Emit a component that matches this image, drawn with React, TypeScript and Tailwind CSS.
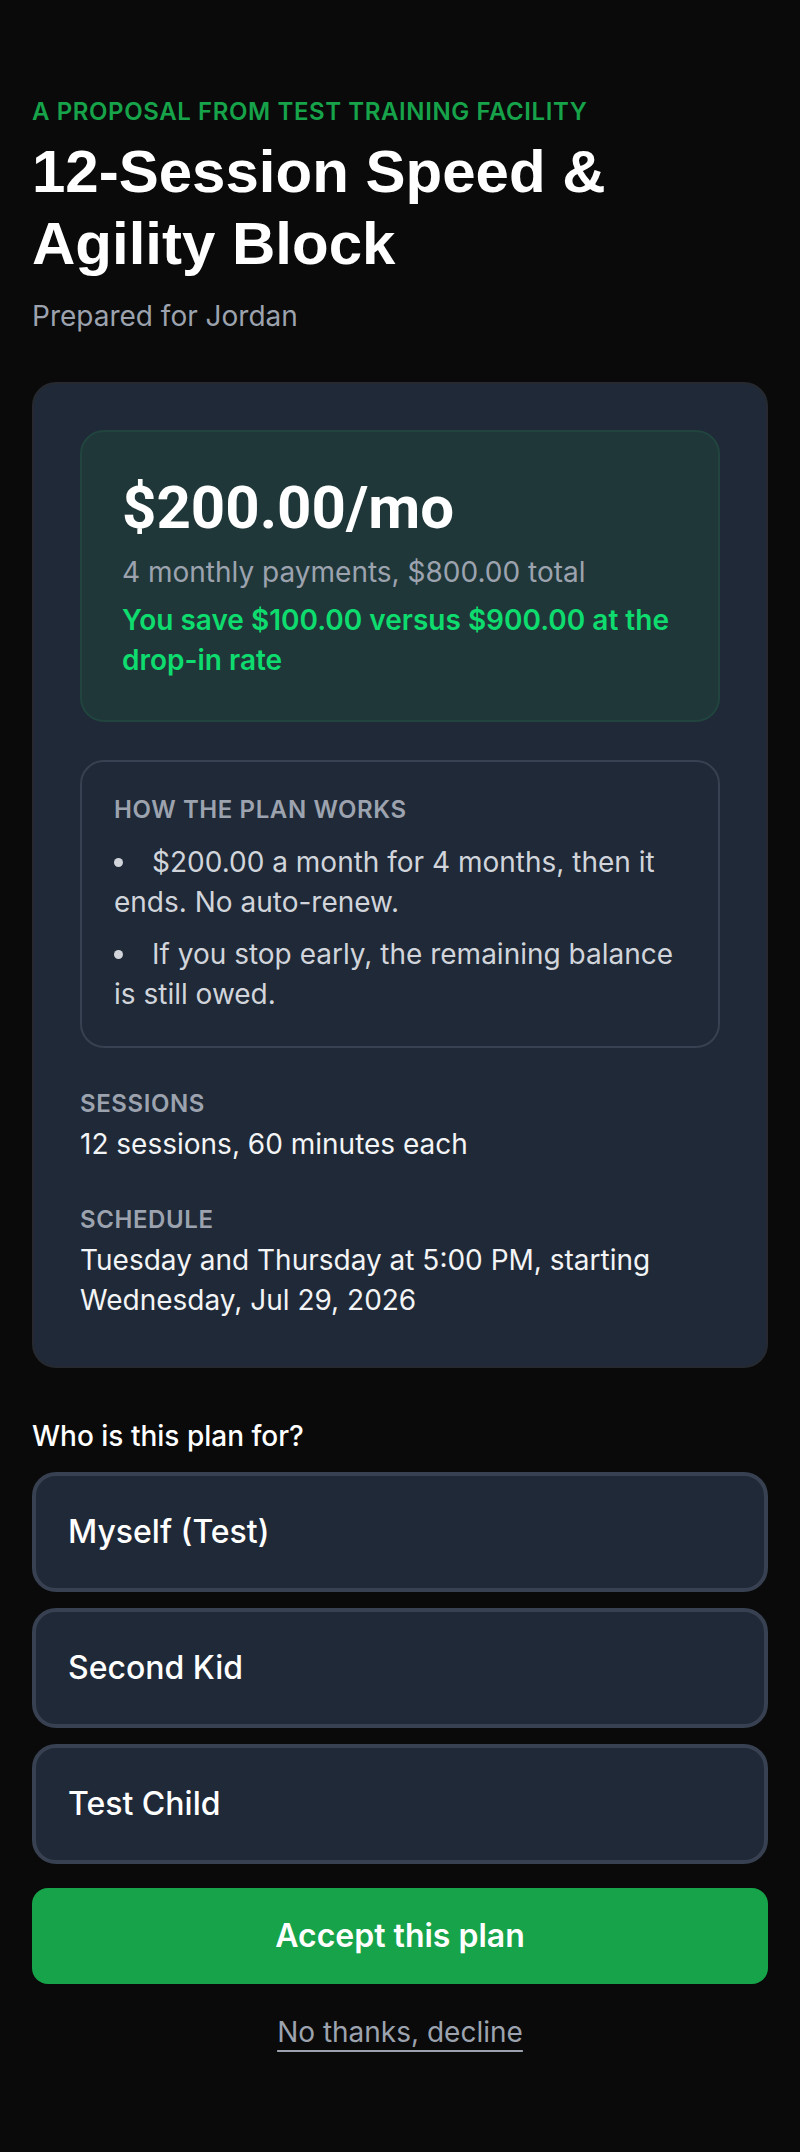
import React from "react";

const options = ["Myself (Test)", "Second Kid", "Test Child"];

export default function App() {
  return (
    <div className="min-h-screen bg-[#0a0a0a] font-['Inter','Noto_Sans',sans-serif] text-white">
      <div className="flex flex-col px-8 pt-24 pb-24">
        <header className="flex flex-col">
          <p className="text-[24px] leading-[32px] font-semibold uppercase tracking-wide text-[#16a34a]">
            A proposal from Test Training Facility
          </p>
          <h1 className="mt-2 font-['Liberation_Sans','Arial',sans-serif] text-[60px] leading-[72px] font-bold text-white">
            12-Session Speed &amp; Agility Block
          </h1>
          <p className="mt-4 text-[28px] leading-[40px] text-[#9ca3af]">Prepared for Jordan</p>
        </header>

        <section className="mt-[46px] flex flex-col gap-10 rounded-[24px] border-2 border-[#262a30] bg-[#1f2937] p-[46px]">
          <div className="rounded-[24px] border-2 border-[#21443f] bg-[#203739] p-10">
            <p className="font-['Roboto','Inter',sans-serif] text-[60px] leading-[72px] font-bold text-white">
              $200.00/mo
            </p>
            <p className="mt-2 text-[28px] leading-[40px] text-[#9ca3af]">4 monthly payments, $800.00 total</p>
            <p className="mt-2 text-[28px] leading-[40px] font-semibold text-[#0edc6e]">
              You save $100.00 versus $900.00 at the drop-in rate
            </p>
          </div>

          <div className="-mt-[2px] rounded-[24px] border-2 border-[#374151] p-8">
            <p className="text-[24px] leading-[32px] font-semibold uppercase tracking-wide text-[#9ca3af]">
              How the plan works
            </p>
            <ul className="mt-4 flex list-inside list-disc flex-col gap-3 text-[28px] leading-[40px] text-[#d1d5db]">
              <li>$200.00 a month for 4 months, then it ends. No auto-renew.</li>
              <li>If you stop early, the remaining balance is still owed.</li>
            </ul>
          </div>

          <div className="flex flex-col">
            <p className="text-[24px] leading-[32px] font-semibold uppercase tracking-wide text-[#9ca3af]">Sessions</p>
            <p className="mt-1 text-[28px] leading-[40px] text-[#f3f4f6]">12 sessions, 60 minutes each</p>
          </div>

          <div className="flex flex-col">
            <p className="text-[24px] leading-[32px] font-semibold uppercase tracking-wide text-[#9ca3af]">Schedule</p>
            <p className="mt-1 text-[28px] leading-[40px] text-[#f3f4f6]">
              Tuesday and Thursday at 5:00 PM, starting Wednesday, Jul 29, 2026
            </p>
          </div>
        </section>

        <section className="mt-12 flex flex-col">
          <p className="text-[28px] leading-[40px] font-medium text-white">Who is this plan for?</p>
          <div className="mt-4 flex flex-col gap-4">
            {options.map((o) => (
              <button
                key={o}
                type="button"
                className="w-full rounded-[24px] border-4 border-[#374151] bg-[#1f2937] px-8 py-8 text-left text-[32px] leading-[48px] font-medium text-white"
              >
                {o}
              </button>
            ))}
          </div>
        </section>

        <button
          type="button"
          className="mt-6 w-full rounded-[16px] bg-[#16a34a] py-6 text-[32px] leading-[48px] font-semibold text-white"
        >
          Accept this plan
        </button>

        <div className="mt-7 flex justify-center">
          <button
            type="button"
            className="text-[28px] leading-[40px] text-[#9ca3af] underline decoration-2 underline-offset-8"
          >
            No thanks, decline
          </button>
        </div>
      </div>
    </div>
  );
}
